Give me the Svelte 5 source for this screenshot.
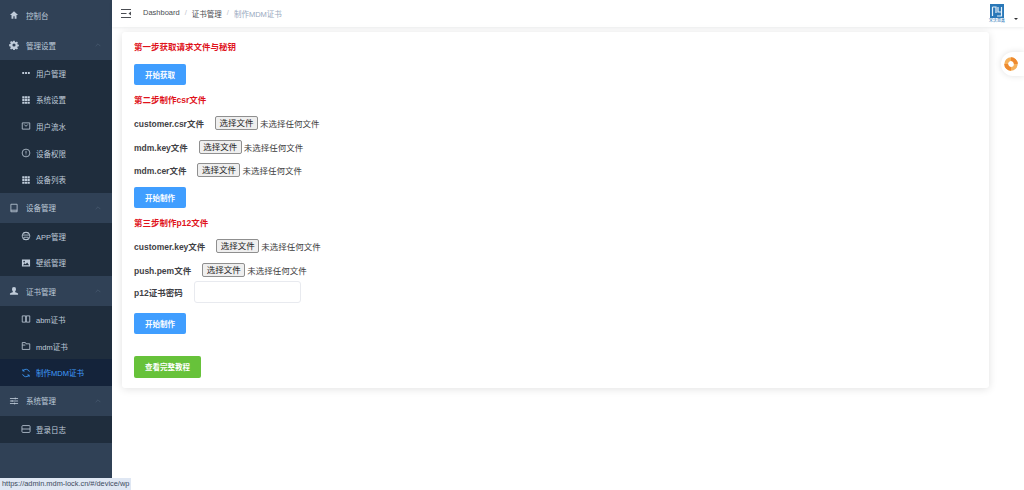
<script>
  const icons = {
    home: 'M8 2 1.500 8H4v6h3v-4h2v4h3V8h2.500z',
    gear: 'M6.800 1h2.400l.4 2 1.300.6 1.700-1.100 1.700 1.700-1.100 1.700.6 1.300 2 .4v2.400l-2 .4-.6 1.300 1.100 1.700-1.700 1.700-1.700-1.100-1.300.6-.4 2H6.800l-.4-2-1.300-.6-1.700 1.100-1.700-1.700 1.100-1.700-.6-1.300-2-.4V6.800l2-.4.6-1.300-1.100-1.700 1.700-1.700 1.700 1.100 1.300-.6zM8 5.500a2.500 2.500 0 1 0 0 5 2.500 2.500 0 0 0 0-5z',
    more: 'M2 6.500h3v3H2zM6.500 6.500h3v3h-3zM11 6.500h3v3h-3z',
    grid: 'M2 2h3.500v3.400H2zM6.200 2h3.600v3.400H6.200zM10.500 2H14v3.400h-3.500zM2 6.300h3.500v3.400H2zM6.200 6.300h3.600v3.400H6.200zM10.500 6.300H14v3.400h-3.500zM2 10.600h3.500V14H2zM6.200 10.600h3.600V14H6.200zM10.500 10.600H14V14h-3.500z',
    picture: 'M1.500 2.500h13v11h-13zM3 11.500h10L9.800 7 7.500 10 6 8.500zM5 4.500a1.300 1.300 0 1 0 0 2.600 1.300 1.300 0 0 0 0-2.600z',
    user: 'M8 1.500a3.200 3.200 0 0 1 3.200 3.500C11.200 7 10 8.500 9.500 9c0 1 3.500 1.500 5 3v2h-13v-2c1.500-1.500 5-2 5-3C6 8.500 4.800 7 4.800 5A3.200 3.200 0 0 1 8 1.500z'
  };
  const strokes = {
    mail: 'M2 3h12v10H2zM5 5.500l3 3 3-3',
    info: 'M8 1.800a6.200 6.200 0 1 0 0 12.400A6.200 6.200 0 0 0 8 1.800zM8 4.500v4.500M8 10.500v1.200',
    tablet: 'M3 2h10v12H3zM3 11.500h10',
    printer: 'M4.500 5V2.500h7V5M8 1.800a6.200 6.200 0 1 0 0 12.400A6.200 6.200 0 0 0 8 1.800zM2 6.500h12M4.500 10h7v3.500h-7z',
    book: 'M2 3h5.500v10H2zM8.500 3H14v10H8.500z',
    folder: 'M2 2.500h5l1 2h6v9H2zM2 6.500h5',
    sync: 'M13.500 6A6 6 0 0 0 3 4.500M2.500 10A6 6 0 0 0 13 11.500M3 1.800v3h3M13 14.200v-3h-3',
    sliders: 'M1.500 4h13M1.500 8h13M1.500 12h13M10 2.500v3M5 6.500v3M9 10.500v3',
    db: 'M3 2.500h10a1.500 1.500 0 0 1 1.500 1.500v8a1.500 1.500 0 0 1-1.500 1.500H3A1.500 1.500 0 0 1 1.500 12V4A1.500 1.500 0 0 1 3 2.500zM1.500 8h13'
  };

  const menu = [
    { label: '控制台', icon: 'home' },
    { label: '管理设置', icon: 'gear', open: true, items: [
      { label: '用户管理', icon: 'more' },
      { label: '系统设置', icon: 'grid' },
      { label: '用户流水', icon: 'mail' },
      { label: '设备权限', icon: 'info' },
      { label: '设备列表', icon: 'grid' }
    ] },
    { label: '设备管理', icon: 'tablet', open: true, items: [
      { label: 'APP管理', icon: 'printer' },
      { label: '壁纸管理', icon: 'picture' }
    ] },
    { label: '证书管理', icon: 'user', open: true, items: [
      { label: 'abm证书', icon: 'book' },
      { label: 'mdm证书', icon: 'folder' },
      { label: '制作MDM证书', icon: 'sync', active: true }
    ] },
    { label: '系统管理', icon: 'sliders', open: true, items: [
      { label: '登录日志', icon: 'db' }
    ] }
  ];
</script>

{#snippet icon(name)}
  <svg class="ico" viewBox="0 0 16 16" aria-hidden="true">
    {#if icons[name]}
      <path d={icons[name]} fill="currentColor" fill-rule="evenodd" />
    {:else}
      <path d={strokes[name]} fill="none" stroke="currentColor" stroke-width="1.300" />
    {/if}
  </svg>
{/snippet}

{#snippet fileRow(name)}
  <div class="file-row">
    <span class="label">{name}</span>
    <button class="file-btn">选择文件</button>
    <span class="file-none">未选择任何文件</span>
  </div>
{/snippet}

<div class="page">
  <aside class="sidebar">
    {#each menu as group}
      <div class="group-title">
        <span class="top-icon">{@render icon(group.icon)}</span>
        <span>{group.label}</span>
        {#if group.open}
          <svg class="chev" viewBox="0 0 10 6" aria-hidden="true"><path d="M1 5l4-4 4 4" fill="none" stroke="currentColor" /></svg>
        {/if}
      </div>
      {#if group.items}
        <div class="sub">
          {#each group.items as item}
            <div class="sub-item" class:active={item.active}>
              <span class="sub-icon">{@render icon(item.icon)}</span>
              <span>{item.label}</span>
            </div>
          {/each}
        </div>
      {/if}
    {/each}
  </aside>

  <main class="main">
    <header class="navbar">
      <svg class="hamburger" viewBox="0 0 10 9" aria-hidden="true">
        <path d="M0 .5h10M0 4.500h5.500M0 8.500h10" stroke="#4a4d52" fill="none" />
        <path d="M10 2.500v4L7.500 4.500z" fill="#4a4d52" />
      </svg>
      <nav class="crumbs">
        <span>Dashboard</span><i>/</i><span>证书管理</span><i>/</i><span class="last">制作MDM证书</span>
      </nav>
      <div class="avatar">
        <div class="logo">
          <svg viewBox="0 0 14 14" aria-hidden="true">
            <rect width="14" height="14" fill="#2a78b8" />
            <path d="M2.500 3v9M2.500 3h3.500v6M8 3v5h3.500M11.500 3v9H7" fill="none" stroke="#e6f1fa" stroke-width="1.200" />
          </svg>
          <span class="logo-text">宋沃恩鑫</span>
        </div>
        <span class="caret"></span>
      </div>
    </header>

    <section class="card">
      <h3 class="step">第一步获取请求文件与秘钥</h3>
      <button class="btn blue first">开始获取</button>

      <h3 class="step second">第二步制作csr文件</h3>
      <div class="rows">
        {@render fileRow('customer.csr文件')}
        {@render fileRow('mdm.key文件')}
        {@render fileRow('mdm.cer文件')}
      </div>
      <button class="btn blue make">开始制作</button>

      <h3 class="step second">第三步制作p12文件</h3>
      <div class="rows">
        {@render fileRow('customer.key文件')}
        {@render fileRow('push.pem文件')}
      </div>
      <div class="pass-row">
        <span class="label">p12证书密码</span>
        <input class="pass" type="text" />
      </div>
      <button class="btn blue last-make">开始制作</button>
      <button class="btn green">查看完整教程</button>
    </section>
  </main>

  <div class="float-tab">
    <svg viewBox="0 0 16 16" aria-hidden="true">
      <circle cx="8" cy="8" r="4.800" fill="none" stroke="#f6b15c" stroke-width="3.800" />
      <path d="M8 3.200a4.800 4.800 0 0 1 4.800 4.800M8 12.800a4.800 4.800 0 0 1-4.800-4.800" fill="none" stroke="#ee8a2f" stroke-width="3.800" />
    </svg>
  </div>

  <div class="status">https://admin.mdm-lock.cn/#/device/wp</div>
</div>

<style>
  :global(body) {
    margin: 0;
    background: #fff;
  }
  .page {
    position: relative;
    display: flex;
    width: 1024px;
    height: 490px;
    overflow: hidden;
    font-family: "Liberation Sans", "Noto Sans CJK SC", sans-serif;
  }
  .sidebar {
    width: 112px;
    flex: none;
    background: #304156;
    color: #bfcbd9;
    font-size: 7.500px;
  }
  .group-title {
    display: flex;
    align-items: center;
    height: 30px;
    padding: 0 9px;
  }
  .top-icon {
    display: flex;
    width: 17px;
  }
  .ico {
    width: 10px;
    height: 10px;
  }
  .chev {
    width: 6px;
    height: 4px;
    margin-left: auto;
    margin-right: 2px;
    color: #4f6277;
  }
  .sub {
    background: #1f2d3d;
  }
  .sub-item {
    display: flex;
    align-items: center;
    height: 26.600px;
    padding-left: 21px;
  }
  .sub-icon {
    display: flex;
    width: 15px;
  }
  .sub-item.active {
    background: #14233a;
    color: #409eff;
  }
  .main {
    flex: 1;
    min-width: 0;
  }
  .navbar {
    display: flex;
    align-items: center;
    height: 27px;
    padding: 0 6px 0 9px;
    box-shadow: 0 1px 3px rgba(0, 21, 41, 0.08);
  }
  .hamburger {
    width: 10px;
    height: 9px;
  }
  .crumbs {
    display: flex;
    margin-left: 12px;
    font-size: 7.500px;
    color: #4a4d52;
  }
  .crumbs i {
    margin: 0 5px;
    font-style: normal;
    color: #c0c4cc;
  }
  .crumbs .last {
    color: #97a8be;
  }
  .avatar {
    display: flex;
    align-items: flex-end;
    margin-left: auto;
  }
  .logo {
    display: flex;
    flex-direction: column;
    align-items: center;
    width: 16px;
  }
  .logo svg {
    width: 14px;
    height: 14px;
  }
  .logo-text {
    font-size: 4px;
    line-height: 6px;
    color: #2a78b8;
    white-space: nowrap;
  }
  .caret {
    width: 0;
    height: 0;
    margin: 0 0 2px 9px;
    border: 2px solid transparent;
    border-top-color: #303133;
  }
  .card {
    display: flex;
    flex-direction: column;
    align-items: flex-start;
    height: 356px;
    box-sizing: border-box;
    margin: 5px 35px 0 10px;
    padding: 8px 12px 10px;
    border-radius: 3px;
    background: #fff;
    box-shadow: 0 1px 8px rgba(0, 0, 0, 0.12);
  }
  .step {
    margin: 0;
    font-size: 8.500px;
    line-height: 14px;
    font-weight: 700;
    color: #e0131c;
  }
  .step.second {
    margin-top: 8px;
  }
  .btn {
    height: 21px;
    padding: 0;
    border: 0;
    border-radius: 2px;
    color: #fff;
    font: 700 7.500px "Liberation Sans", "Noto Sans CJK SC", sans-serif;
  }
  .blue {
    width: 52px;
    background: #409eff;
  }
  .green {
    width: 67px;
    height: 22px;
    margin-top: 21.500px;
    background: #67c23a;
  }
  .first {
    margin-top: 10px;
  }
  .rows {
    margin-top: 4px;
  }
  .make {
    margin-top: 5px;
  }
  .last-make {
    margin-top: 10px;
  }
  .file-row {
    display: flex;
    align-items: center;
    height: 23.700px;
    font-size: 8.500px;
    color: #3c3c3c;
  }
  .label {
    margin-right: 11px;
    font-size: 8.500px;
    font-weight: 700;
    color: #3f4145;
  }
  .file-btn {
    width: 43px;
    height: 14px;
    padding: 0;
    border: 1px solid #8f8f8f;
    border-radius: 2px;
    background: #efefef;
    color: #222;
    font: 8.500px/12px "Liberation Sans", "Noto Sans CJK SC", sans-serif;
  }
  .file-none {
    margin-left: 2px;
  }
  .pass-row {
    display: flex;
    align-items: center;
  }
  .pass {
    width: 107px;
    height: 22px;
    box-sizing: border-box;
    border: 1px solid #e8eaef;
    border-radius: 3px;
    outline: 0;
  }
  .float-tab {
    position: absolute;
    top: 52px;
    right: 0;
    display: flex;
    align-items: center;
    width: 23px;
    height: 24px;
    padding-left: 2px;
    box-sizing: border-box;
    border-radius: 12px 0 0 12px;
    background: #fff;
    box-shadow: 0 0 6px rgba(0, 0, 0, 0.12);
  }
  .float-tab svg {
    width: 16px;
    height: 16px;
  }
  .status {
    position: absolute;
    left: 0;
    bottom: 0;
    height: 12px;
    padding: 0 2px;
    background: #dfe7f3;
    color: #3b4a5c;
    font-size: 7.400px;
    line-height: 12px;
  }
</style>
